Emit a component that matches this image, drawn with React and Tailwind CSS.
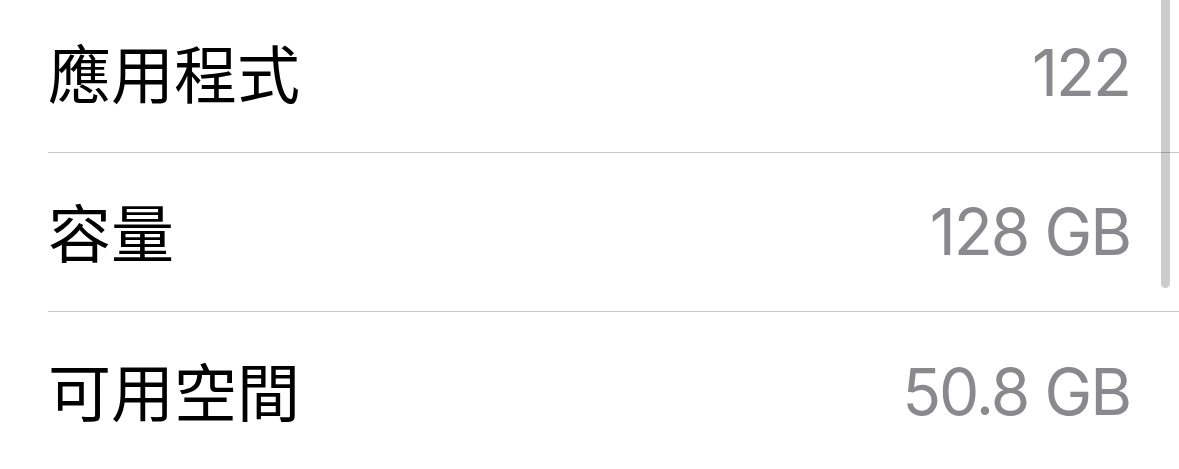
const rows = [
  { label: "應用程式", value: "122" },
  { label: "容量", value: "128 GB" },
  { label: "可用空間", value: "50.8 GB" },
];

function InfoRow({ label, value, last }) {
  return (
    <div
      className={`ml-[48px] flex h-[159px] items-center justify-between pr-[49px] ${
        last ? "" : "border-b border-[#c8c7cc]"
      }`}
    >
      <span className="mb-[6px] font-['Noto_Sans_CJK_TC',sans-serif] text-[63px] leading-none text-black">
        {label}
      </span>
      <span className="font-['Inter',sans-serif] text-[64px] leading-none tracking-[-2px] text-[#8a8a8e]">
        {value}
      </span>
    </div>
  );
}

export default function App() {
  return (
    <div className="relative h-[469px] w-[1179px] overflow-hidden bg-white">
      <div className="-mt-[6px]">
        {rows.map((row, i) => (
          <InfoRow key={row.label} {...row} last={i === rows.length - 1} />
        ))}
      </div>
      {/* scroll indicator */}
      <div className="absolute right-[9px] top-[-20px] h-[308px] w-[9px] rounded-full bg-black/20" />
    </div>
  );
}
